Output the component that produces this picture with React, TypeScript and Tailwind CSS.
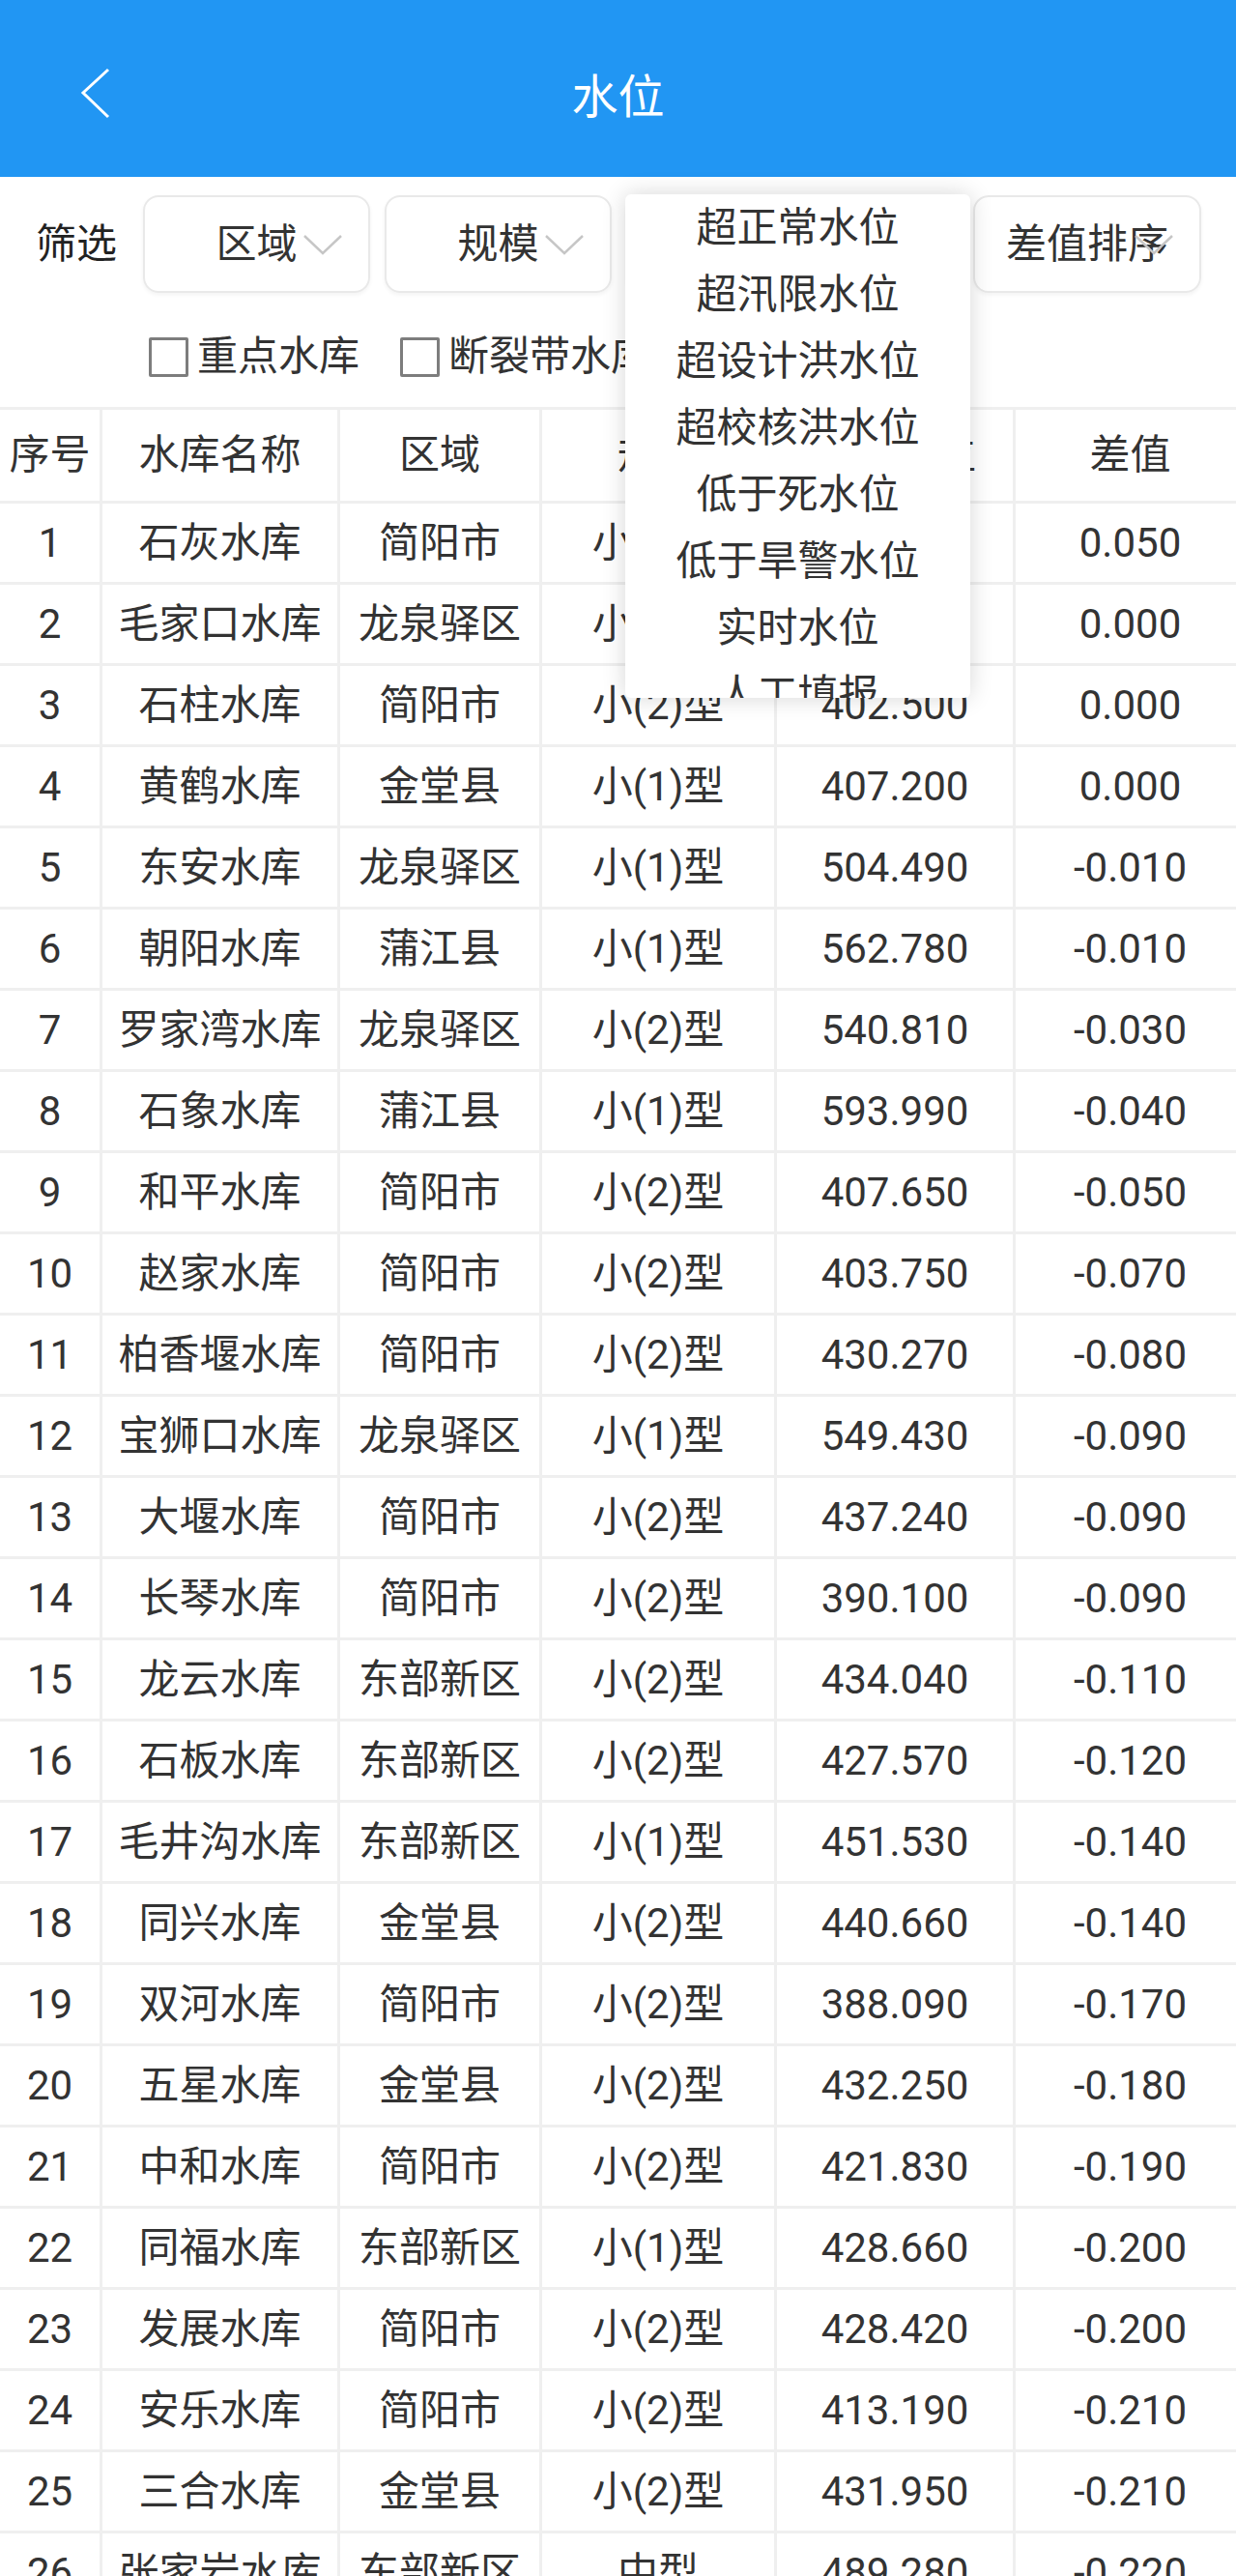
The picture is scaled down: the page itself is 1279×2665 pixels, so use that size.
import React from 'react';

const rows: [string, string, string, string, string, string][] = [
  ['1', '石灰水库', '简阳市', '小(2)型', '463.520', '0.050'],
  ['2', '毛家口水库', '龙泉驿区', '小(1)型', '512.300', '0.000'],
  ['3', '石柱水库', '简阳市', '小(2)型', '402.500', '0.000'],
  ['4', '黄鹤水库', '金堂县', '小(1)型', '407.200', '0.000'],
  ['5', '东安水库', '龙泉驿区', '小(1)型', '504.490', '-0.010'],
  ['6', '朝阳水库', '蒲江县', '小(1)型', '562.780', '-0.010'],
  ['7', '罗家湾水库', '龙泉驿区', '小(2)型', '540.810', '-0.030'],
  ['8', '石象水库', '蒲江县', '小(1)型', '593.990', '-0.040'],
  ['9', '和平水库', '简阳市', '小(2)型', '407.650', '-0.050'],
  ['10', '赵家水库', '简阳市', '小(2)型', '403.750', '-0.070'],
  ['11', '柏香堰水库', '简阳市', '小(2)型', '430.270', '-0.080'],
  ['12', '宝狮口水库', '龙泉驿区', '小(1)型', '549.430', '-0.090'],
  ['13', '大堰水库', '简阳市', '小(2)型', '437.240', '-0.090'],
  ['14', '长琴水库', '简阳市', '小(2)型', '390.100', '-0.090'],
  ['15', '龙云水库', '东部新区', '小(2)型', '434.040', '-0.110'],
  ['16', '石板水库', '东部新区', '小(2)型', '427.570', '-0.120'],
  ['17', '毛井沟水库', '东部新区', '小(1)型', '451.530', '-0.140'],
  ['18', '同兴水库', '金堂县', '小(2)型', '440.660', '-0.140'],
  ['19', '双河水库', '简阳市', '小(2)型', '388.090', '-0.170'],
  ['20', '五星水库', '金堂县', '小(2)型', '432.250', '-0.180'],
  ['21', '中和水库', '简阳市', '小(2)型', '421.830', '-0.190'],
  ['22', '同福水库', '东部新区', '小(1)型', '428.660', '-0.200'],
  ['23', '发展水库', '简阳市', '小(2)型', '428.420', '-0.200'],
  ['24', '安乐水库', '简阳市', '小(2)型', '413.190', '-0.210'],
  ['25', '三合水库', '金堂县', '小(2)型', '431.950', '-0.210'],
  ['26', '张家岩水库', '东部新区', '中型', '489.280', '-0.220'],
];

const options = ['超正常水位', '超汛限水位', '超设计洪水位', '超校核洪水位', '低于死水位', '低于旱警水位', '实时水位', '人工填报'];

// column widths, each includes its 3px right border
const colW = ['w-[106px]', 'w-[246px]', 'w-[209px]', 'w-[243px]', 'w-[247px]', 'w-[240px]'];

const Chevron = () => (
  <svg className="absolute right-[26px] top-1/2 -translate-y-1/2" width="42" height="22" viewBox="0 0 42 22" fill="none">
    <path d="M2 2 L21 20 L40 2" stroke="#c6c6c6" strokeWidth="2.5" />
  </svg>
);

const Select = ({ label, width }: { label: string; width: string }) => (
  <div className={`relative h-[101px] ${width} shrink-0 rounded-[16px] border-2 border-[#e9e9e9] shadow-[0_2px_4px_rgba(0,0,0,0.05)] flex items-center justify-center`}>
    <span className="text-[42px] leading-none text-[#333]">{label}</span>
    <Chevron />
  </div>
);

const Checkbox = ({ label }: { label: string }) => (
  <div className="flex items-center gap-[9px]">
    <div className="w-[41px] h-[41px] border-[3px] border-[#7d7d7d] rounded-[2px]" />
    <span className="text-[42px] leading-none text-[#333]">{label}</span>
  </div>
);

export default function App() {
  return (
    <div className="relative w-[1279px] h-[2665px] overflow-hidden bg-white font-[Roboto,'Noto_Sans_CJK_SC',sans-serif]">
      <header className="h-[183px] bg-[#2196f3] grid grid-cols-[1fr_auto_1fr] items-center">
        <div className="pl-[83px] pt-[10px]">
          <svg width="32" height="54" viewBox="0 0 32 54" fill="none">
            <path d="M29 2 L3 26 L29 51" stroke="white" strokeWidth="3" />
          </svg>
        </div>
        <h1 className="text-[48px] leading-none text-white pt-[18px]">水位</h1>
        <div />
      </header>

      <div className="mt-[19px] flex items-center">
        <span className="w-[148px] pl-[37px] shrink-0 text-[42px] leading-none text-[#222]">筛选</span>
        <div className="flex gap-[15px]">
          <Select label="区域" width="w-[235px]" />
          <Select label="规模" width="w-[235px]" />
          <Select label="水位类型" width="w-[344px]" />
          <Select label="差值排序" width="w-[236px]" />
        </div>
      </div>

      <div className="mt-[45px] h-[42px] pl-[154px] flex items-center gap-[42px]">
        <Checkbox label="重点水库" />
        <Checkbox label="断裂带水库" />
      </div>

      <div className="mt-[31px] w-[1291px] border-t-[3px] border-[#efefef] text-[42px] text-[#333]">
        <div className="flex h-[97px] border-b-[3px] border-[#efefef]">
          {['序号', '水库名称', '区域', '规模', '实时水位', '差值'].map((h, i) => (
            <div key={h} className={`${colW[i]} shrink-0 flex items-center justify-center whitespace-nowrap border-r-[3px] border-[#efefef] leading-none`}>
              {h}
            </div>
          ))}
        </div>
        {rows.map((r) => (
          <div key={r[0]} className="flex h-[84px] border-b-[3px] border-[#efefef]">
            {r.map((c, i) => (
              <div key={i} className={`${colW[i]} shrink-0 flex items-center justify-center whitespace-nowrap border-r-[3px] border-[#efefef] leading-none`}>
                {c}
              </div>
            ))}
          </div>
        ))}
      </div>

      <div className="absolute left-[647px] top-[201px] w-[357px] h-[521px] bg-white rounded-[6px] shadow-[0_0_24px_rgba(0,0,0,0.16)] overflow-hidden">
        {options.map((o) => (
          <div key={o} className="h-[69px] flex items-center justify-center text-[42px] leading-none text-[#333] whitespace-nowrap">
            {o}
          </div>
        ))}
      </div>
    </div>
  );
}
